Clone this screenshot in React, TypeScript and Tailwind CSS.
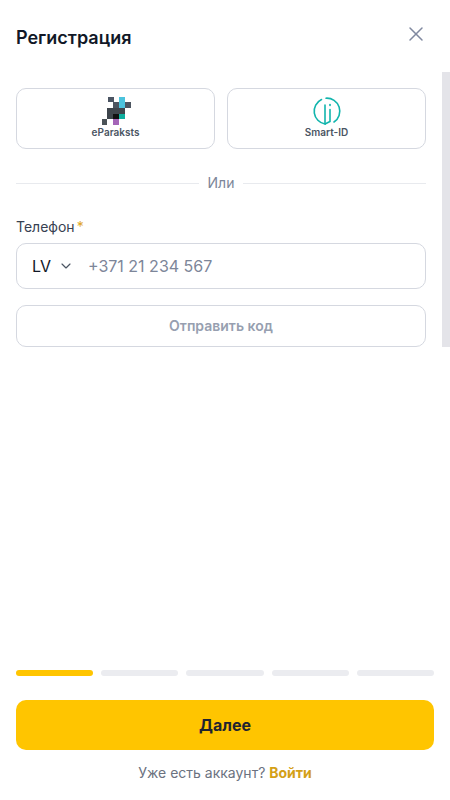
import { ChevronDown, X } from "lucide-react";

const steps = [true, false, false, false, false];

function EParakstsLogo() {
  return (
    <svg width="30" height="30" viewBox="0 0 30 30" shapeRendering="crispEdges">
      <rect x="7" y="1" width="6" height="5" fill="#4b5563" />
      <rect x="18" y="1" width="6" height="11" fill="#4cc3dd" />
      <rect x="12" y="6" width="6" height="6" fill="#4d5560" />
      <rect x="24" y="6" width="6" height="6" fill="#4d5560" />
      <rect x="6" y="12" width="12" height="6" fill="#3f464d" />
      <rect x="18" y="12" width="6" height="6" fill="#3f464d" />
      <rect x="6" y="18" width="6" height="5" fill="#3f464d" />
      <rect x="12" y="18" width="6" height="5" fill="#111111" />
      <rect x="18" y="18" width="6" height="5" fill="#0fae9e" />
      <rect x="1" y="23" width="5" height="6" fill="#4b5358" />
      <rect x="12" y="23" width="6" height="6" fill="#a565b8" />
    </svg>
  );
}

function SmartIdLogo() {
  return (
    <svg width="30" height="30" viewBox="0 0 30 30" fill="none" stroke="#12b5ad" strokeWidth="1.6" strokeLinecap="round">
      <path d="M9.5 3.5A13 13 0 0 0 13 28V9" />
      <path d="M14 2.2A13 13 0 0 1 22 26" />
      <path d="M18 13.5V25.5L13 28" />
      <path d="M18 8.5V9.5" />
    </svg>
  );
}

export default function App() {
  return (
    <div className="flex h-screen w-full flex-col bg-white font-['Inter','Noto_Sans',sans-serif] text-[#111827]">
      <header className="flex h-[72px] shrink-0 items-start justify-between pl-4 pr-[22px] pt-[25px]">
        <h1 className="text-[18px] leading-[26px] font-semibold">Регистрация</h1>
        <X className="-mt-[3px] text-[#8089a0]" size={24} strokeWidth={1.5} />
      </header>

      <div className="flex">
        <div className="min-w-0 flex-1 pl-4 pr-4 pt-4">
          <div className="grid grid-cols-2 gap-3">
            <button className="flex h-[61px] flex-col items-center rounded-[10px] border border-[#d5d8e0] pt-[7px]">
              <EParakstsLogo />
              <span className="-mt-px text-[10px] leading-[14px] font-semibold text-[#4b5563]">eParaksts</span>
            </button>
            <button className="flex h-[61px] flex-col items-center rounded-[10px] border border-[#d5d8e0] pt-[7px]">
              <SmartIdLogo />
              <span className="-mt-px text-[10px] leading-[14px] font-semibold text-[#4b5563]">Smart-ID</span>
            </button>
          </div>

          <div className="mt-6 flex items-center gap-[9px]">
            <div className="h-px flex-1 bg-[#e8eaee]" />
            <span className="text-sm leading-5 text-[#7d8699]">Или</span>
            <div className="h-px flex-1 bg-[#e8eaee]" />
          </div>

          <div className="mt-[24px] flex h-5 items-center text-sm text-[#374151]">
            Телефон<span className="ml-0.5 text-[#e0a526]">*</span>
          </div>
          <div className="mt-[6px] flex h-[46px] items-center rounded-[10px] border border-[#d5d8e0] pl-[15px]">
            <span className="text-base text-[#111827]">LV</span>
            <ChevronDown className="ml-[7px] text-[#4b5563]" size={16} strokeWidth={1.75} />
            <span className="ml-[14px] text-base text-[#7d8699]">+371 21 234 567</span>
          </div>
          <button className="mt-4 flex h-[42px] w-full items-center justify-center rounded-[10px] border border-[#d5d8e0] text-sm font-semibold text-[#979fb0]">
            Отправить код
          </button>
        </div>
        <div className="w-2 shrink-0 bg-[#e4e4e9]" />
      </div>

      <div className="flex-1" />

      <div className="flex gap-2 px-4">
        {steps.map((on, i) => (
          <div key={i} className={on ? "h-1.5 flex-1 rounded-full bg-[#ffc500]" : "h-1.5 flex-1 rounded-full bg-[#ebecf0]"} />
        ))}
      </div>

      <div className="px-4 pt-6">
        <button className="flex h-[50px] w-full items-center justify-center rounded-[10px] bg-[#ffc500] text-base font-bold text-[#1f2430]">
          Далее
        </button>
      </div>

      <p className="h-[50px] pt-[13px] text-center text-sm leading-5 text-[#6b7280]">
        Уже есть аккаунт? <span className="font-bold text-[#d4a017]">Войти</span>
      </p>
    </div>
  );
}
